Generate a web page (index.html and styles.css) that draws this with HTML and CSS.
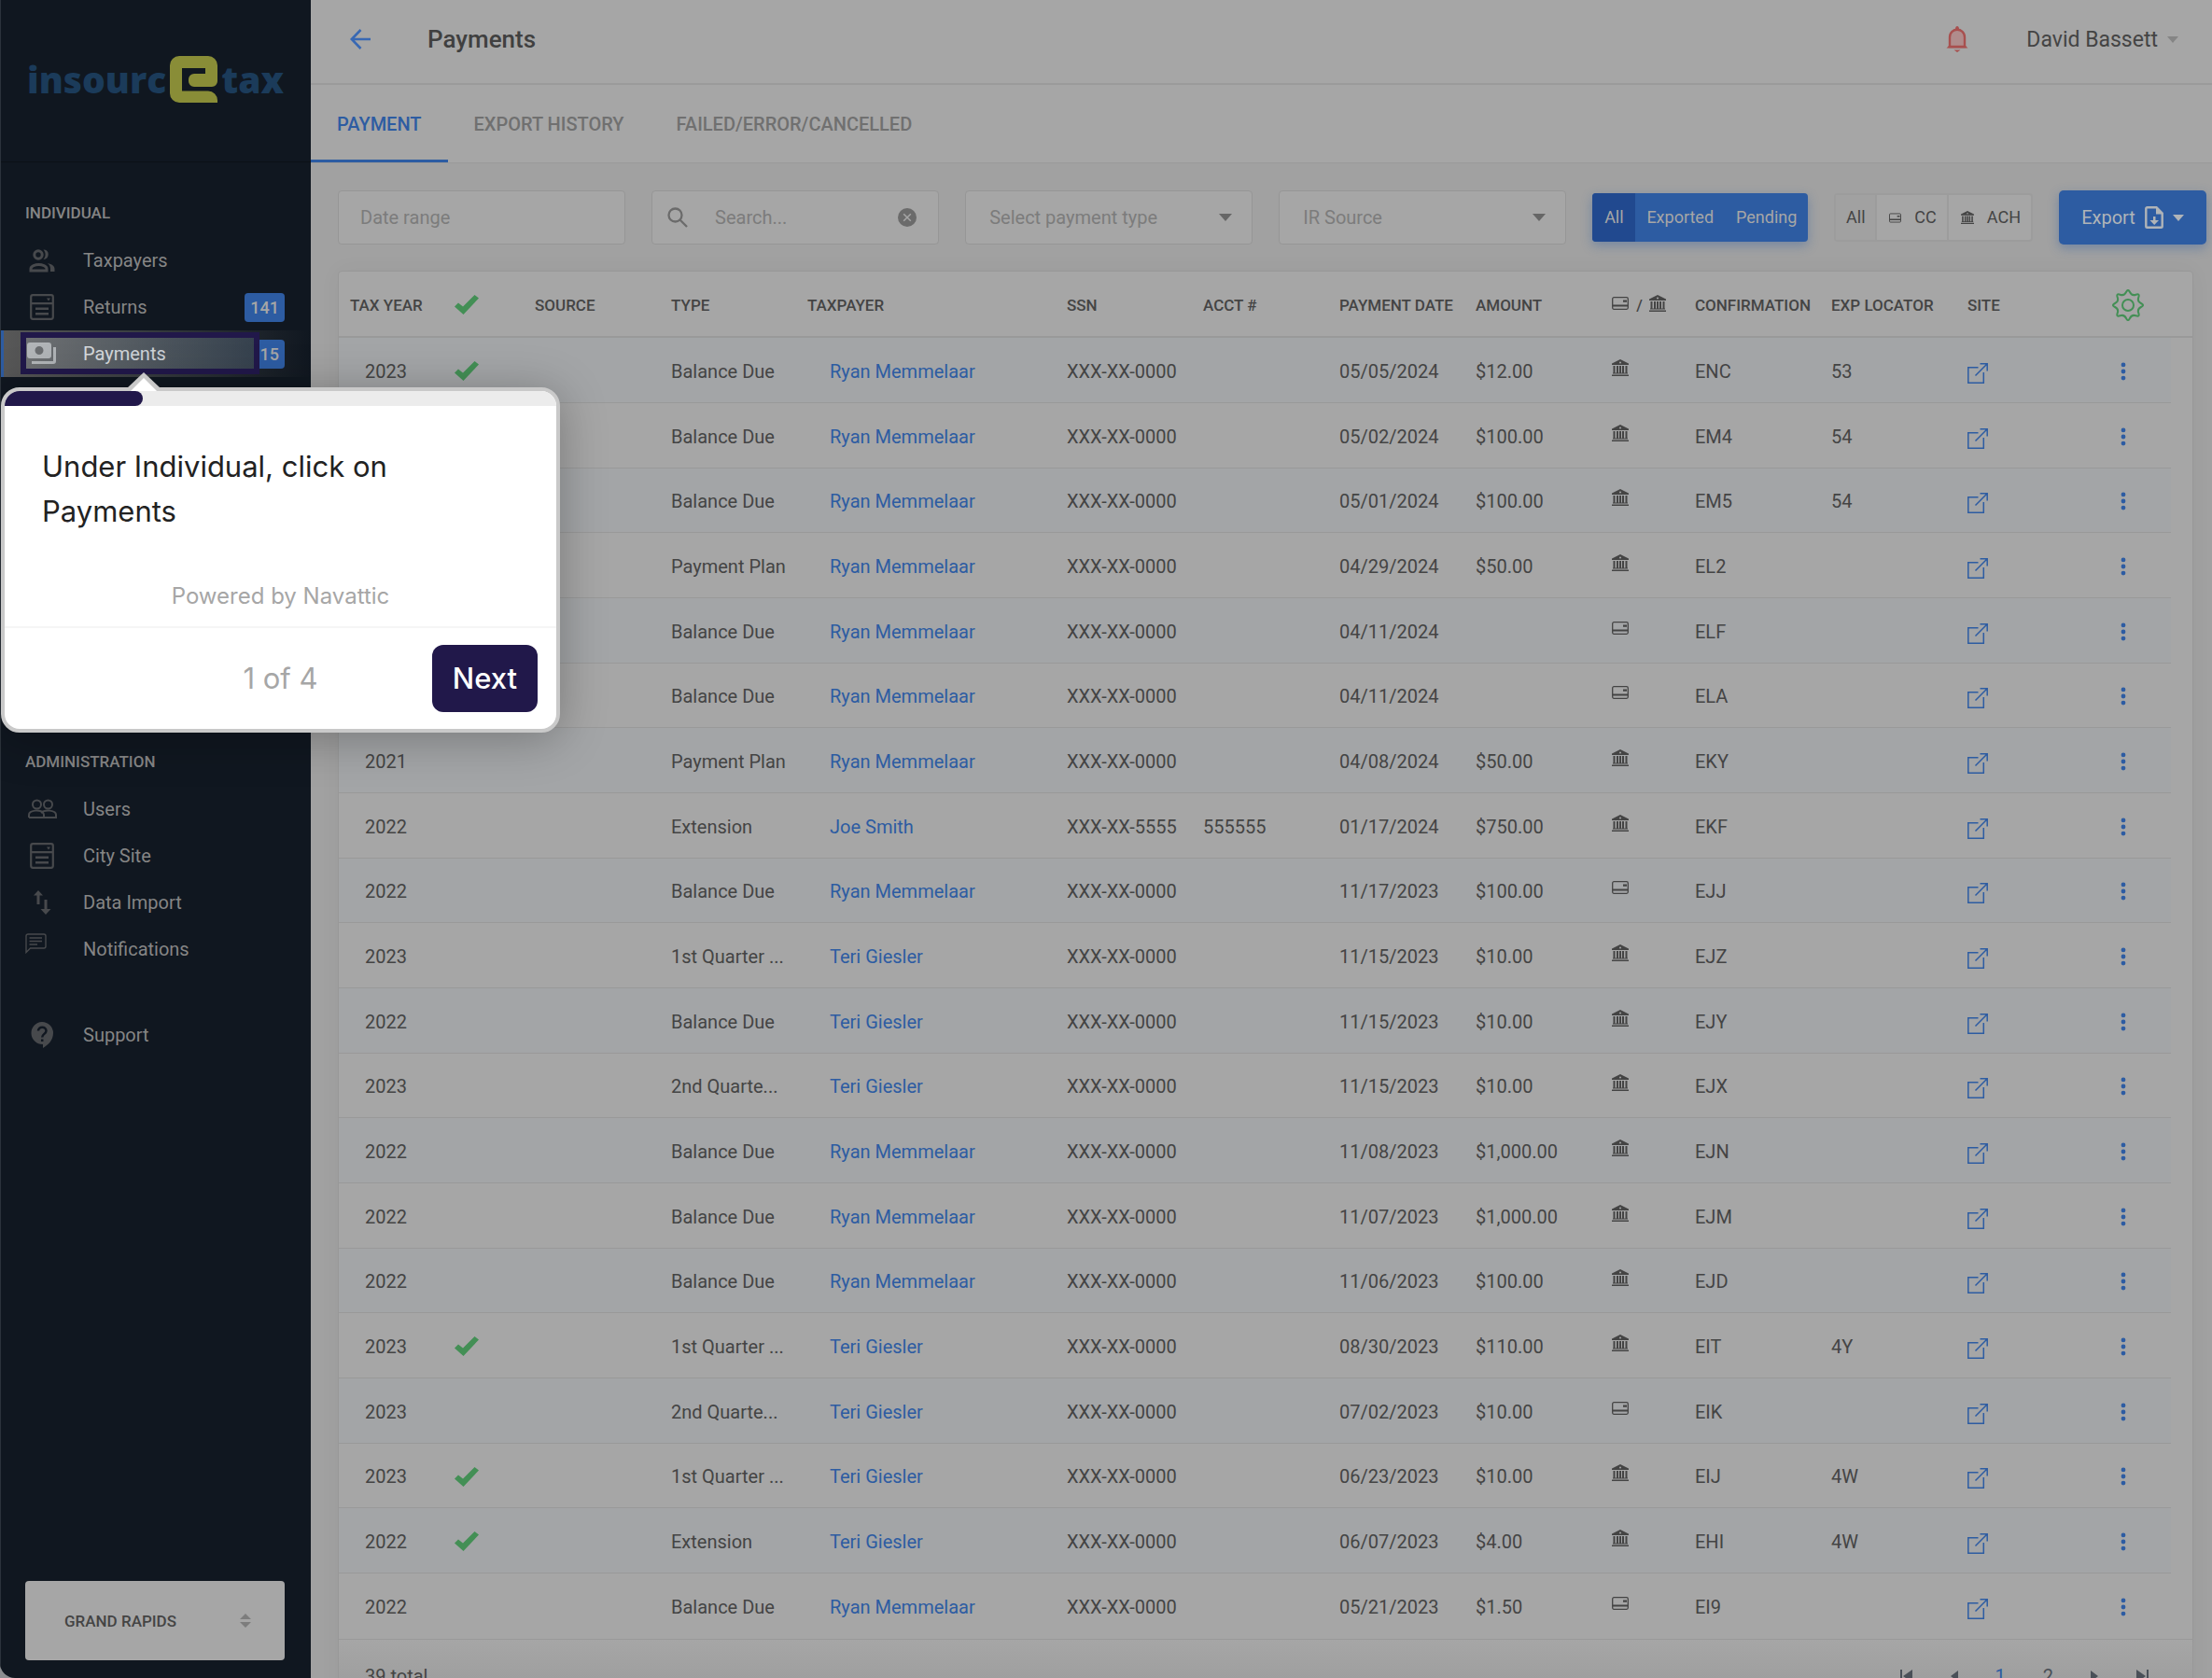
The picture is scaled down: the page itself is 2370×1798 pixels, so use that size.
FILE: index.html
```
<!DOCTYPE html>
<html lang="en">
<head>
<meta charset="utf-8">
<title>Payments</title>
<link rel="stylesheet" href="styles.css">
</head>
<body>
<svg class="sprite" aria-hidden="true">
  <symbol id="i-check" viewBox="0 0 26 21"><path d="M0 12.5 4 8.5 9 12.5 21.500 0 26 3.500 9.500 21Z" fill="currentColor"/></symbol>
  <symbol id="i-bank" viewBox="0 0 18 18"><path d="M9 0 18 4.500V6H0V4.500ZM1.500 7h2v7.500h-2ZM5 7h2v7.500H5ZM8 7h2v7.500H8ZM11 7h2v7.500h-2ZM14.500 7h2v7.500h-2ZM1 14.500h16v1H1ZM0 16.500h18V18H0Z" fill="currentColor"/><circle cx="9" cy="3.500" r="1" fill="#a5a6a7"/></symbol>
  <symbol id="i-card" viewBox="0 0 18 14"><rect x=".7" y=".7" width="16.600" height="12.600" rx="1.500" fill="none" stroke="currentColor" stroke-width="1.300"/><path d="M1 8.500h16v2H1ZM12 3.500h4v2.200h-4Z" fill="currentColor"/></symbol>
  <symbol id="i-open" viewBox="0 0 22 22"><path d="M11.500 4.700H.8v16.500h16.500V10M13.500.8h7.700v7.700M21.200.8 8.500 13.500" fill="none" stroke="currentColor" stroke-width="1.500"/></symbol>
  <symbol id="i-dots" viewBox="0 0 6 20"><path d="M3 .5a2.400 2.400 0 1 1 0 4.800 2.400 2.400 0 0 1 0-4.800ZM3 7.600a2.400 2.400 0 1 1 0 4.800 2.400 2.400 0 0 1 0-4.800ZM3 14.700a2.400 2.400 0 1 1 0 4.800 2.400 2.400 0 0 1 0-4.800Z" fill="currentColor"/></symbol>
  <symbol id="i-gear" viewBox="-17 -17 34 34"><g fill="none" stroke="currentColor" stroke-width="2"><path d="M13.950 2.010Q9.700 4.020 11.280 8.440Q12.870 12.870 8.440 11.280Q4.020 9.700 2.010 13.950Q0 18.200-2.010 13.950Q-4.020 9.700-8.440 11.280Q-12.870 12.870-11.280 8.440Q-9.700 4.020-13.950 2.010Q-18.200 0-13.950-2.010Q-9.700-4.020-11.280-8.440Q-12.870-12.870-8.440-11.280Q-4.020-9.700-2.010-13.950Q0-18.200 2.010-13.950Q4.020-9.700 8.440-11.280Q12.870-12.870 11.280-8.440Q9.700-4.020 13.950-2.010Q18.200 0 13.950 2.010Z"/><circle r="6"/></g></symbol>
  <symbol id="i-form" viewBox="0 0 26 28"><rect x="1.200" y="1.200" width="23.600" height="25.600" rx="2" fill="none" stroke="currentColor" stroke-width="2.200"/><path d="M1 9h24v2.200H1ZM6 14.500h14v2.500H6ZM6 20h14v2.500H6ZM18 4.500h4l-2 3Z" fill="currentColor"/></symbol>
</svg>

<div class="app">
  <aside class="sidebar">
    <div class="logo">
      <span>insourc</span>
      <svg width="51" height="50" viewBox="0 0 51 50" role="img" aria-label="e"><path fill="#898d37" d="M10 0H41a10 10 0 0 1 10 10V27a6 6 0 0 1-6 6H26a6 6 0 0 1-6-6V25a6 6 0 0 1 6-6H38V13H13V37.500H41a10 10 0 0 1 10 10V50H10A10 10 0 0 1 0 40V10A10 10 0 0 1 10 0Z"/></svg>
      <span>tax</span>
    </div>
    <nav class="nav">
      <h2 class="nav-title">INDIVIDUAL</h2>
      <a class="nav-item" href="#"><span class="nav-icon"><svg width="28" height="26" viewBox="0 0 28 26" fill="none" stroke="currentColor" stroke-width="3"><circle cx="10" cy="7" r="4.200"/><path d="M2 24v-2c0-3 5-4.500 8.500-4.500S19 19 19 22v2Z"/><path d="M15.500 1.500c7-1 7 10.500 0 10.500 2.800-3 2.800-7.500 0-10.500ZM20 16c4.500 1 7.500 3 7.500 6v3H23v-3c0-2.500-1-4.500-3-6Z" fill="currentColor" stroke="none"/></svg></span>Taxpayers</a>
      <a class="nav-item" href="#"><span class="nav-icon"><svg width="26" height="28"><use href="#i-form"/></svg></span>Returns<span class="badge">141</span></a>
      <a class="nav-item nav-active" href="#"><span class="nav-icon"><svg width="32" height="24" viewBox="0 0 32 24" fill="currentColor"><path fill-rule="evenodd" d="M3 0H23a3 3 0 0 1 3 3V14a3 3 0 0 1-3 3H3a3 3 0 0 1-3-3V3a3 3 0 0 1 3-3ZM13 4a4.500 4.500 0 1 0 0 9 4.500 4.500 0 0 0 0-9Z"/><path d="M28 5h3v15a3 3 0 0 1-3 3H5v-3h23Z"/></svg></span>Payments<span class="badge">15</span></a>
      <h2 class="nav-title nav-title-admin">ADMINISTRATION</h2>
      <a class="nav-item" href="#"><span class="nav-icon"><svg width="31" height="22" viewBox="0 0 31 22" fill="none" stroke="currentColor" stroke-width="2"><circle cx="9.500" cy="6" r="4.500"/><circle cx="21.500" cy="6" r="4.500"/><path d="M1 20v-3c0-5 12-6 15.500-2M14 15c4-4 16-3 16 2v3H1M17 20v-3c0-1-.5-2-2-3"/></svg></span>Users</a>
      <a class="nav-item" href="#"><span class="nav-icon"><svg width="26" height="28"><use href="#i-form"/></svg></span>City Site</a>
      <a class="nav-item" href="#"><span class="nav-icon"><svg width="20" height="26" viewBox="0 0 20 26" fill="currentColor"><path d="M6 0 11 5.500H7.500V15h-3V5.500H1ZM14 26 8.500 20H12.500V10h3V20H19.500Z"/></svg></span>Data Import</a>
      <a class="nav-item" href="#"><span class="nav-icon nav-icon-top"><svg width="23" height="22" viewBox="0 0 23 22" fill="none" stroke="currentColor" stroke-width="1.400"><path d="M1 20.500V3a2 2 0 0 1 2-2H20a2 2 0 0 1 2 2V14a2 2 0 0 1-2 2H5.500ZM4.500 5H18M4.500 8.500H18M4.500 12H13"/></svg></span>Notifications</a>
      <a class="nav-item nav-support" href="#"><span class="nav-icon"><svg width="24" height="28" viewBox="0 0 24 28"><path fill="currentColor" d="M12 0a12 12 0 0 1 12 12c0 8-6 13-11 16v-4a12 12 0 0 1-1-24Z"/><path d="M8 9.500c0-5 8.500-5 8.500 0 0 3.500-4.300 3.300-4.300 7M12.200 18.500v2.500" fill="none" stroke="#101720" stroke-width="2.500"/></svg></span>Support</a>
    </nav>
    <label class="city">
      <select class="city-select" aria-label="City"><option>GRAND RAPIDS</option></select>
      <svg class="city-arrows" width="12" height="15" viewBox="0 0 12 15" fill="#7d7d7d"><path d="M6 0 12 6H0ZM6 15 0 9H12Z"/></svg>
    </label>
  </aside>

  <main class="main">
    <header class="topbar">
      <a class="back" href="#" aria-label="Back"><svg width="22" height="22" viewBox="0 0 22 22" fill="none" stroke="currentColor" stroke-width="2.600"><path d="M22 11H2M11.500 1 1.800 11 11.500 21"/></svg></a>
      <h1 class="title">Payments</h1>
      <svg class="bell" width="24" height="28" viewBox="0 0 24 28"><path d="M4 22V12c0-11 16-11 16 0v10Z" fill="#b08c8c" stroke="#a8504f" stroke-width="2.400"/><path d="M.5 23.500 3 21h18l2.500 2.500ZM8.500 25.500h7L12 28ZM10 3c0-4 4-4 4 0Z" fill="#a8504f"/></svg>
      <button class="user" type="button">David Bassett<span class="caret caret-soft"></span></button>
    </header>
    <nav class="tabs">
      <a class="tab tab-active" href="#">PAYMENT</a>
      <a class="tab" href="#">EXPORT HISTORY</a>
      <a class="tab" href="#">FAILED/ERROR/CANCELLED</a>
    </nav>
    <form class="filters">
      <label class="field"><input class="control" type="text" placeholder="Date range" aria-label="Date range"></label>
      <label class="field field-search">
        <svg width="22" height="22" viewBox="0 0 22 22" fill="none" stroke="#6b6b6b" stroke-width="2.300"><circle cx="8.500" cy="8.500" r="7"/><path d="M13.500 13.500 21 21"/></svg>
        <input class="control" type="text" placeholder="Search..." aria-label="Search">
        <button class="clear" type="button" aria-label="Clear"><svg width="20" height="20" viewBox="0 0 20 20"><circle cx="10" cy="10" r="10" fill="#6b6b6b"/><path d="m6.200 6.200 7.600 7.600m0-7.600-7.600 7.600" stroke="#a6a6a6" stroke-width="1.500"/></svg></button>
      </label>
      <label class="field field-select"><select class="control" aria-label="Payment type"><option>Select payment type</option></select><span class="caret"></span></label>
      <label class="field field-select"><select class="control" aria-label="IR source"><option>IR Source</option></select><span class="caret"></span></label>
      <div class="group group-blue">
        <button class="seg seg-on" type="button">All</button><button class="seg" type="button">Exported</button><button class="seg" type="button">Pending</button>
      </div>
      <div class="group group-plain">
        <button class="seg seg-on" type="button">All</button><button class="seg" type="button"><svg width="13" height="11"><use href="#i-card"/></svg>CC</button><button class="seg" type="button"><svg width="14" height="14"><use href="#i-bank"/></svg>ACH</button>
      </div>
      <button class="export" type="button">Export<svg width="20" height="24" viewBox="0 0 20 24"><path d="M1.300 2.500a1.300 1.300 0 0 1 1.300-1.300H12.500L18.700 7.500V21.500a1.300 1.300 0 0 1-1.300 1.300H2.600a1.300 1.300 0 0 1-1.300-1.300Z" fill="none" stroke="currentColor" stroke-width="2.400"/><path d="M12 1v7.500h7ZM9 11h2.500v4H15l-4.800 5L5.500 15H9Z" fill="currentColor"/></svg><span class="caret"></span></button>
    </form>

    <section class="card">
      <table class="grid">
        <colgroup><col class="w-year"><col class="w-check"><col class="w-std"><col class="w-std"><col><col class="w-std"><col class="w-std"><col class="w-std"><col class="w-std"><col class="w-method"><col class="w-std"><col class="w-std"><col class="w-std"><col class="w-menu"><col class="w-end"></colgroup>
        <thead>
          <tr>
            <th>TAX YEAR</th>
            <th class="green"><svg width="26" height="21"><use href="#i-check"/></svg></th>
            <th>SOURCE</th><th>TYPE</th><th>TAXPAYER</th><th>SSN</th><th>ACCT #</th><th>PAYMENT DATE</th><th>AMOUNT</th>
            <th class="method"><svg width="18" height="14"><use href="#i-card"/></svg> / <svg width="18" height="18"><use href="#i-bank"/></svg></th>
            <th>CONFIRMATION</th><th>EXP LOCATOR</th><th>SITE</th>
            <th class="settings green"><svg width="34" height="34"><use href="#i-gear"/></svg></th>
            <th class="end"></th>
          </tr>
        </thead>
        <tbody id="rows"></tbody>
      </table>
      <footer class="foot">
        <span>39 total</span>
        <div class="pager">
          <a href="#" aria-label="First"><svg width="14" height="14" viewBox="0 0 14 14"><path d="M0 0h2v14H0ZM13 0v14L3 7Z" fill="currentColor"/></svg></a>
          <a href="#" aria-label="Previous"><svg width="8" height="12" viewBox="0 0 8 12"><path d="M8 0v12L0 6Z" fill="currentColor"/></svg></a>
          <a class="page-on" href="#">1</a>
          <a href="#">2</a>
          <a href="#" aria-label="Next"><svg width="8" height="12" viewBox="0 0 8 12"><path d="M0 0v12l8-6Z" fill="currentColor"/></svg></a>
          <a href="#" aria-label="Last"><svg width="14" height="14" viewBox="0 0 14 14"><path d="M12 0h2v14h-2ZM1 0v14l10-7Z" fill="currentColor"/></svg></a>
        </div>
      </footer>
    </section>
  </main>
</div>

<div class="spot"></div>
<div class="tour" role="dialog" aria-label="Tour">
  <svg class="tour-arrow" width="36" height="20" viewBox="0 0 36 20"><path d="M0 17 18 0 36 17V20H0Z" fill="#c9c9c9"/><path d="M4 20 18 6 32 20Z" fill="#fff"/></svg>
  <div class="tour-progress"><div class="tour-bar"></div></div>
  <p class="tour-text">Under Individual, click on Payments</p>
  <a class="tour-credit" href="#">Powered by Navattic</a>
  <div class="tour-foot"><span class="tour-count">1 of 4</span><button class="tour-next" type="button">Next</button></div>
</div>
<script src="app.js"></script>
</body>
</html>
```
FILE: app.js
```
// year, exported, type, taxpayer, SSN, account, date, amount, method, confirmation, locator
const RYAN = 'Ryan Memmelaar';
const TERI = 'Teri Giesler';
const SSN = 'XXX-XX-0000';
const payments = [
  ['2023', 1, 'Balance Due', RYAN, SSN, '', '05/05/2024', '$12.00', 'bank', 'ENC', '53'],
  ['2023', 1, 'Balance Due', RYAN, SSN, '', '05/02/2024', '$100.00', 'bank', 'EM4', '54'],
  ['2023', 1, 'Balance Due', RYAN, SSN, '', '05/01/2024', '$100.00', 'bank', 'EM5', '54'],
  ['2023', 0, 'Payment Plan', RYAN, SSN, '', '04/29/2024', '$50.00', 'bank', 'EL2', ''],
  ['2023', 0, 'Balance Due', RYAN, SSN, '', '04/11/2024', '', 'card', 'ELF', ''],
  ['2023', 0, 'Balance Due', RYAN, SSN, '', '04/11/2024', '', 'card', 'ELA', ''],
  ['2021', 0, 'Payment Plan', RYAN, SSN, '', '04/08/2024', '$50.00', 'bank', 'EKY', ''],
  ['2022', 0, 'Extension', 'Joe Smith', 'XXX-XX-5555', '555555', '01/17/2024', '$750.00', 'bank', 'EKF', ''],
  ['2022', 0, 'Balance Due', RYAN, SSN, '', '11/17/2023', '$100.00', 'card', 'EJJ', ''],
  ['2023', 0, '1st Quarter ...', TERI, SSN, '', '11/15/2023', '$10.00', 'bank', 'EJZ', ''],
  ['2022', 0, 'Balance Due', TERI, SSN, '', '11/15/2023', '$10.00', 'bank', 'EJY', ''],
  ['2023', 0, '2nd Quarte...', TERI, SSN, '', '11/15/2023', '$10.00', 'bank', 'EJX', ''],
  ['2022', 0, 'Balance Due', RYAN, SSN, '', '11/08/2023', '$1,000.00', 'bank', 'EJN', ''],
  ['2022', 0, 'Balance Due', RYAN, SSN, '', '11/07/2023', '$1,000.00', 'bank', 'EJM', ''],
  ['2022', 0, 'Balance Due', RYAN, SSN, '', '11/06/2023', '$100.00', 'bank', 'EJD', ''],
  ['2023', 1, '1st Quarter ...', TERI, SSN, '', '08/30/2023', '$110.00', 'bank', 'EIT', '4Y'],
  ['2023', 0, '2nd Quarte...', TERI, SSN, '', '07/02/2023', '$10.00', 'card', 'EIK', ''],
  ['2023', 1, '1st Quarter ...', TERI, SSN, '', '06/23/2023', '$10.00', 'bank', 'EIJ', '4W'],
  ['2022', 1, 'Extension', TERI, SSN, '', '06/07/2023', '$4.00', 'bank', 'EHI', '4W'],
  ['2022', 0, 'Balance Due', RYAN, SSN, '', '05/21/2023', '$1.50', 'card', 'EI9', '']
];

const icon = (name, w, h) => `<svg width="${w}" height="${h}"><use href="#i-${name}"/></svg>`;

document.getElementById('rows').innerHTML = payments.map(
  ([year, done, type, payer, ssn, acct, date, amount, method, conf, loc]) => `<tr>
    <td class="year">${year}</td>
    <td class="green">${done ? icon('check', 26, 21) : ''}</td>
    <td></td><td>${type}</td>
    <td class="payer"><a href="#">${payer}</a></td>
    <td>${ssn}</td><td>${acct}</td><td>${date}</td><td>${amount}</td>
    <td class="method">${icon(method, 18, method === 'bank' ? 18 : 14)}</td>
    <td>${conf}</td><td>${loc}</td>
    <td class="site"><a href="#" aria-label="Open site">${icon('open', 22, 22)}</a></td>
    <td class="menu"><button type="button" aria-label="More">${icon('dots', 6, 20)}</button></td>
    <td class="end"></td>
  </tr>`).join('');
```
FILE: styles.css
```
:root {
  --navy: #101720;
  --surface: #a6a6a6;
  --page: #a1a1a1;
  --stripe: #a3a5a7;
  --line: #999;
  --ink: #444;
  --blue: #2d5ca2;
  --green: #438f55;
  --indigo: #21184a;
}

* { box-sizing: border-box; }

body {
  margin: 0;
  background: #8b8d90;
  color: var(--ink);
  font: 20px/24px Roboto, "Liberation Sans", sans-serif;
}

a { color: inherit; text-decoration: none; }
button, input, select { font: inherit; color: inherit; border: 0; background: none; padding: 0; margin: 0; }
svg { display: block; flex: none; }
.sprite { position: absolute; width: 0; height: 0; }

.app {
  display: flex;
  height: 100vh;
  overflow: hidden;
  border-bottom-left-radius: 16px;
  background: var(--page);
}

/* Sidebar */
.sidebar {
  flex: none;
  width: 333px;
  display: flex;
  flex-direction: column;
  padding-bottom: 19px;
  background: var(--navy);
  border-left: 1px solid #2c333b;
  color: #858585;
}
.logo {
  display: flex;
  align-items: center;
  gap: 4px;
  height: 174px;
  padding: 0 28px 4px;
  border-bottom: 1px solid #0b1017;
  color: #1b3b5a;
  font: 800 39px/50px "Open Sans", sans-serif;
}
.nav-title { margin: 0; padding: 42px 26px 14px; font-size: 17px; font-weight: 500; line-height: 24px; }
.nav-title-admin { padding-top: 400px; }
.nav-item { position: relative; display: flex; align-items: center; height: 50px; padding: 0 28px 0 26px; }
.nav-icon { width: 36px; margin-right: 26px; display: flex; justify-content: center; color: #47494c; }
.nav-icon-top { justify-content: flex-start; padding-bottom: 12px; }
.nav-support { margin-top: 42px; }
.badge {
  margin-left: auto;
  padding: 0 6px;
  border-radius: 4px;
  background: var(--blue);
  color: #a6a6a6;
  font-size: 18px;
  font-weight: 500;
  line-height: 31px;
}
.nav-active {
  border-left: 3px solid var(--blue);
  padding-left: 23px;
  background: linear-gradient(90deg, #585858, #3c4043 40%, var(--navy));
  color: #fff;
}
.nav-active .nav-icon { justify-content: flex-start; padding-left: 2px; color: #bdbfc0; }
.city { position: relative; display: flex; align-items: center; margin: auto 28px 0 26px; }
.city-select {
  appearance: none;
  width: 100%;
  height: 85px;
  padding: 0 42px;
  border-radius: 4px;
  background: var(--surface);
  color: var(--ink);
  font-size: 17px;
  font-weight: 500;
}
.city-arrows { position: absolute; right: 36px; }

/* Header */
.main { flex: 1; min-width: 0; }
.topbar {
  display: flex;
  align-items: center;
  height: 91px;
  padding: 0 36px 6px 42px;
  background: var(--surface);
  border-bottom: 2px solid #9a9a9a;
}
.back { color: #3868b3; }
.title { margin: 0 auto 0 61px; font-size: 26px; font-weight: 500; line-height: 32px; color: #404040; }
.bell { margin-right: 62px; }
.user { display: flex; align-items: center; gap: 10px; padding-top: 2px; font-size: 23px; }
.caret { border: 7px solid transparent; border-top: 8px solid #666; border-bottom: 0; }
.caret-soft { border-width: 6px; border-top: 7px solid #858585; border-bottom: 0; }
.tabs { display: flex; height: 84px; background: var(--surface); border-bottom: 1px solid #9a9a9a; color: #707070; }
.tab { padding: 30px 28px 0; font-size: 20px; font-weight: 500; }
.tab-active { color: var(--blue); border-bottom: 3px solid var(--blue); }

/* Filters */
.filters { display: flex; align-items: center; gap: 28px; padding: 29px 6px 28px 29px; }
.field {
  flex: 1 1 200px;
  min-width: 0;
  position: relative;
  display: flex;
  align-items: center;
  height: 58px;
  padding: 0 23px;
  background: var(--surface);
  border: 1px solid #969696;
  border-radius: 4px;
}
.control { appearance: none; flex: 1; width: 100%; min-width: 0; outline: 0; color: #7c7c7c; }
.control::placeholder { color: #7c7c7c; opacity: 1; }
.field-search { padding-left: 16px; gap: 29px; }
.field-select { padding: 0 21px 0 25px; }
.group { display: flex; height: 52px; border-radius: 4px; font-size: 18px; }
.seg { display: flex; align-items: center; justify-content: center; gap: 14px; }
.group-blue { background: var(--blue); color: #a6a6a6; box-shadow: 0 4px 12px rgba(45, 92, 162, .4); }
.group-blue .seg { padding: 0 12px; }
.group-blue .seg-on { width: 46px; padding: 0; background: #21498f; border-radius: 4px 0 0 4px; }
.group-plain { background: var(--surface); border: 2px solid #9c9c9c; }
.group-plain .seg { padding: 0 11px 0 13px; }
.group-plain .seg-on { width: 42px; padding: 0; background: #a1a1a1; }
.group-plain .seg + .seg { border-left: 2px solid #9c9c9c; }
.export {
  display: flex;
  align-items: center;
  justify-content: center;
  gap: 10px;
  width: 158px;
  height: 58px;
  border-radius: 5px;
  background: var(--blue);
  color: #b0b4b8;
  box-shadow: 0 4px 12px rgba(45, 92, 162, .4);
}
.export .caret { border-width: 6px; border-top: 7px solid #b0b4b8; border-bottom: 0; }

/* Table */
.card { margin: 0 20px 0 29px; background: var(--surface); border: 1px solid #989898; border-radius: 4px; box-shadow: 0 0 24px rgba(0, 0, 0, .04); }
.grid { width: 100%; table-layout: fixed; border-collapse: separate; border-spacing: 0; }
.w-year { width: 112px; }
.w-check { width: 86px; }
.w-std { width: 146px; }
.w-method { width: 89px; }
.w-menu { width: 84px; }
.w-end { width: 23px; }
th, td { height: 70px; padding: 2px 0 0 12px; text-align: left; white-space: nowrap; font-weight: 400; }
th { height: 71px; border-bottom: 2px solid var(--line); font-size: 17px; font-weight: 500; }
td { border-bottom: 1px solid var(--line); }
tbody tr:nth-child(3n) td { height: 69px; }
tbody tr:nth-child(odd) td:not(.end) { background: var(--stripe); }
td.end { border: 0; }
tbody tr:last-child td { border-bottom: 0; }
.grid .year { padding-left: 28px; }
.grid .payer { padding-left: 36px; }
.payer, .site, .menu { color: var(--blue); }
.green { color: var(--green); }
.method svg { display: inline-block; margin-right: 4px; vertical-align: 1px; }
th.method svg:last-child { margin: 0 0 0 3px; vertical-align: -1px; }
td.method svg { display: block; margin: 0 0 8px; }
.site svg { margin-top: 4px; }
.grid .settings { padding-left: 21px; }
.grid .menu { padding-left: 30px; }
.menu button { display: block; }
.foot {
  display: flex;
  align-items: center;
  justify-content: space-between;
  height: 78px;
  padding: 0 47px 0 28px;
  border-top: 1px solid var(--line);
  background: linear-gradient(var(--surface), #999);
}
.pager { display: flex; align-items: center; gap: 40px; color: #4a5058; }
.pager .page-on { color: var(--blue); }

/* Guided tour */
.spot {
  position: absolute;
  left: 22px;
  top: 356px;
  width: 256px;
  height: 45px;
  border: 6px solid var(--indigo);
  background: linear-gradient(90deg, rgba(160, 165, 170, .35), rgba(90, 110, 130, .4));
}
.tour {
  position: absolute;
  left: 1px;
  top: 415px;
  width: 599px;
  border: 4px solid #c9c9c9;
  border-radius: 20px;
  background: #fff;
  box-shadow: 0 6px 50px rgba(0, 0, 0, .28);
  color: #222;
  font-family: Inter, sans-serif;
}
.tour-arrow { position: absolute; left: 131px; top: -20px; }
.tour-progress { height: 16px; border-radius: 16px 16px 0 0; overflow: hidden; background: #ececec; }
.tour-bar { width: 25%; height: 16px; border-radius: 0 8px 8px 0; background: var(--indigo); }
.tour-text { margin: 0; padding: 41px 80px 49px 40px; font-size: 31px; line-height: 48px; }
.tour-credit { display: block; padding-bottom: 14px; text-align: center; font-size: 24px; line-height: 36px; color: #a6a6a6; }
.tour-foot {
  display: grid;
  grid-template-columns: 1fr auto 1fr;
  align-items: center;
  height: 110px;
  padding: 0 20px;
  border-top: 2px solid #f5f5f5;
}
.tour-count { grid-column: 2; font-size: 31px; color: #a6a6a6; }
.tour-next {
  justify-self: end;
  width: 113px;
  height: 72px;
  border-radius: 12px;
  background: var(--indigo);
  color: #fff;
  font-size: 31px;
  font-weight: 500;
}
```
